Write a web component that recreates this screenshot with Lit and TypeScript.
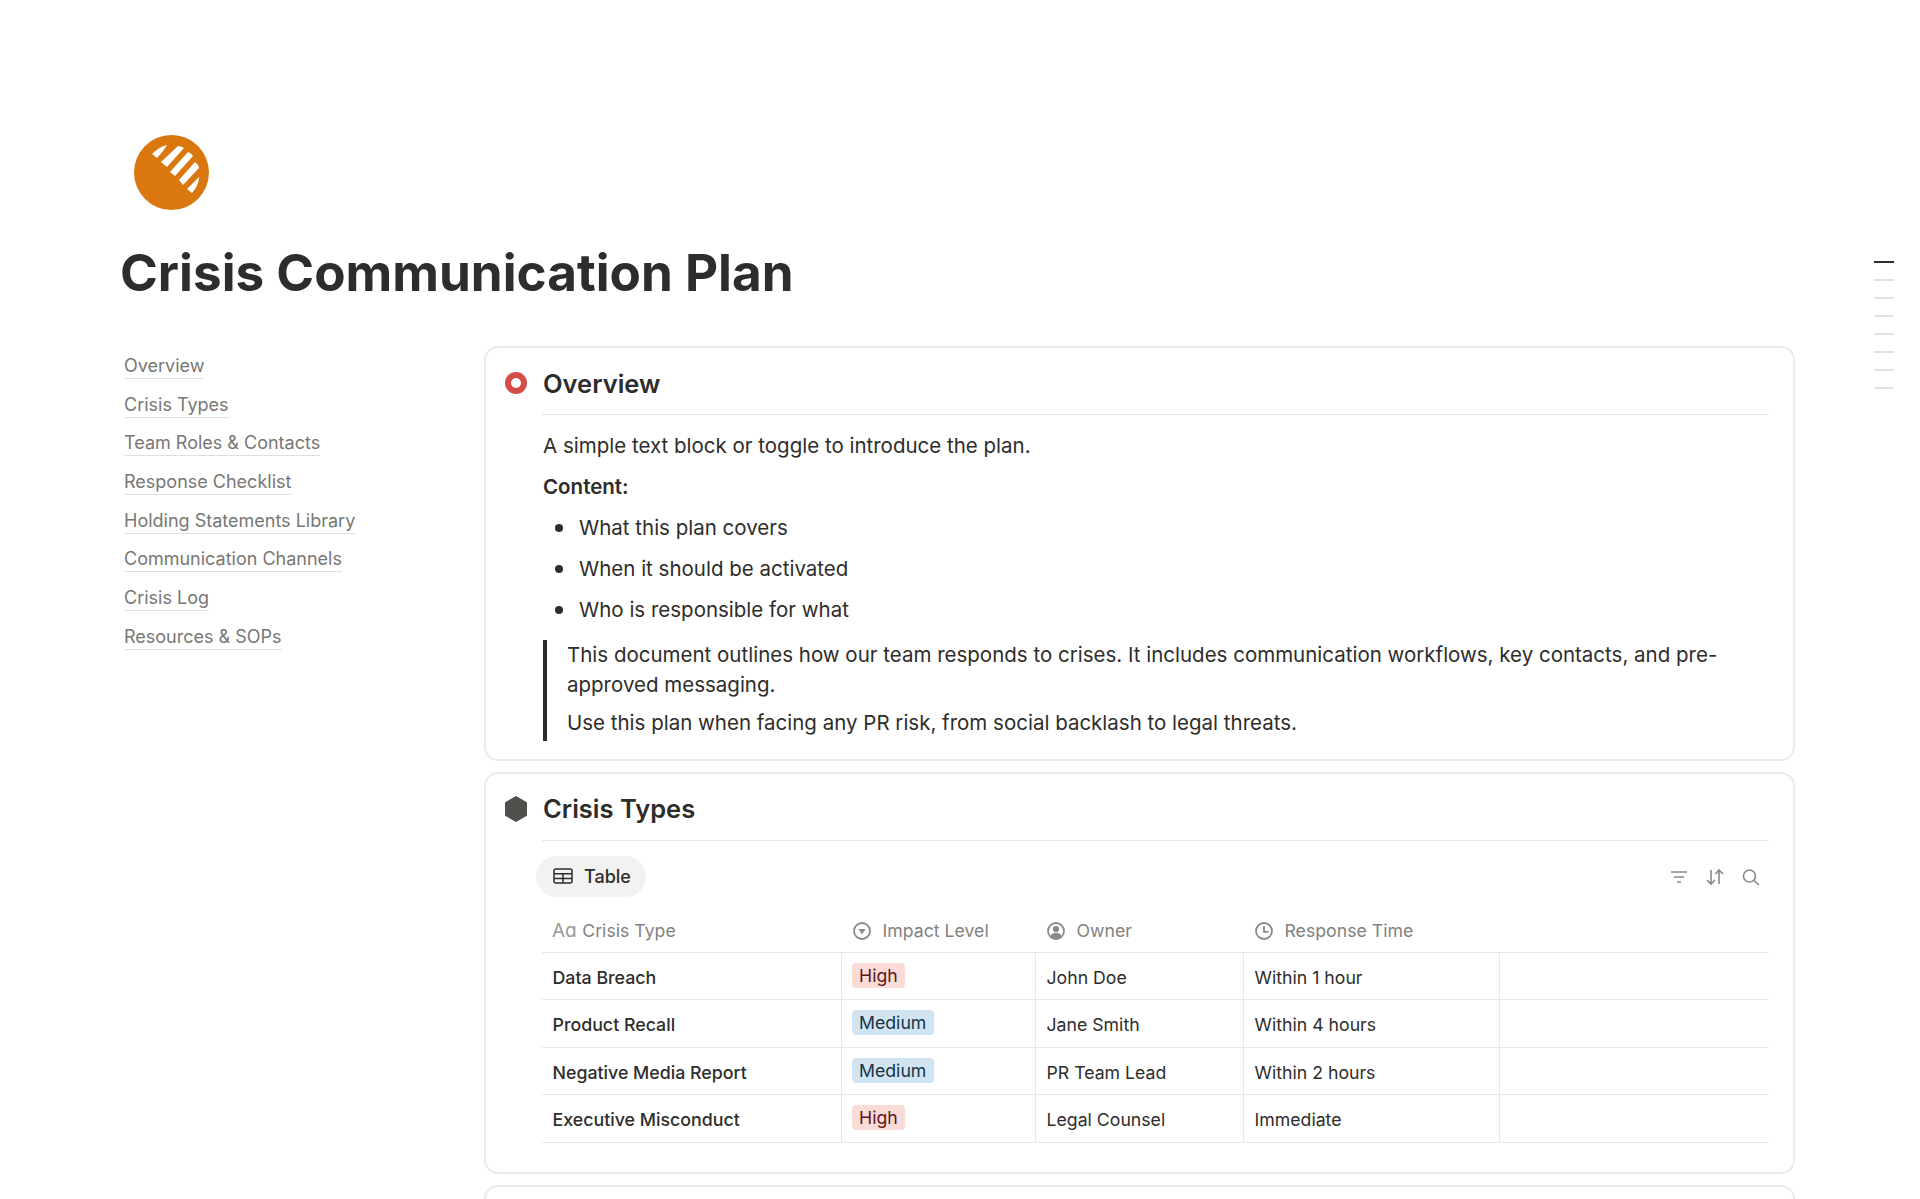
import { LitElement, css, html, svg } from "lit";
import { customElement } from "lit/decorators.js";

const navItems = [
  "Overview",
  "Crisis Types",
  "Team Roles & Contacts",
  "Response Checklist",
  "Holding Statements Library",
  "Communication Channels",
  "Crisis Log",
  "Resources & SOPs",
];

const rows = [
  { type: "Data Breach", impact: "High", owner: "John Doe", time: "Within 1 hour" },
  { type: "Product Recall", impact: "Medium", owner: "Jane Smith", time: "Within 4 hours" },
  { type: "Negative Media Report", impact: "Medium", owner: "PR Team Lead", time: "Within 2 hours" },
  { type: "Executive Misconduct", impact: "High", owner: "Legal Counsel", time: "Immediate" },
];

const logo = html`<svg width="75" height="75" viewBox="0 0 75 75">
  <circle cx="37.5" cy="37.5" r="37.5" fill="#da770f" />
  <g fill="#fff">
    <path d="M18 19 Q25 12 33 10 Q29 17 23 23 Z" />
    <path d="M27 27 L44 11 Q47 11 50 13 L33 32 Z" />
    <path d="M36 37 L54 17 Q57 18 59 21 L41 41 Z" />
    <path d="M45 45 L61 27 Q64 29 65 33 L49 50 Z" />
    <path d="M53 54 L65 42 Q65 50 58 58 Z" />
  </g>
</svg>`;

const grey = "#8a8987";

const icons = {
  select: svg`<circle cx="9" cy="9" r="8" fill="none" stroke=${grey} stroke-width="1.8" /><path d="M5.4 7h7.2L9 12.2z" fill=${grey} />`,
  person: svg`<circle cx="9" cy="9" r="8" fill="none" stroke=${grey} stroke-width="1.8" /><circle cx="9" cy="7" r="3.1" fill=${grey} /><path d="M3.4 14.2c1-2.7 3.1-3.5 5.6-3.5s4.6.8 5.6 3.5A8 8 0 0 1 9 17a8 8 0 0 1-5.6-2.8z" fill=${grey} />`,
  clock: svg`<circle cx="9" cy="9" r="8" fill="none" stroke=${grey} stroke-width="1.8" /><path d="M9 4.2V9.8H13.6" fill="none" stroke=${grey} stroke-width="1.8" />`,
};

const icon = (body: unknown) => html`<svg width="18" height="18" viewBox="0 0 18 18">${body}</svg>`;

@customElement("app-root")
export class AppRoot extends LitElement {
  static styles = css`
    :host {
      display: block;
      height: 100vh;
      overflow: hidden;
      position: relative;
      background: #fff;
      color: #2e2d2b;
      font-family: Inter, "Noto Sans", sans-serif;
    }

    .page {
      padding: 135px 125px 0 120px;
    }

    .logo {
      display: block;
      margin-left: 14px;
    }

    h1 {
      margin: 29px 0 0;
      font-size: 51.2px;
      line-height: 58px;
      font-weight: 700;
    }

    .columns {
      display: flex;
      margin-top: 45px;
    }

    .side {
      flex: 0 0 360px;
      padding: 7px 0 0 4px;
      display: flex;
      flex-direction: column;
      align-items: flex-start;
      gap: 12.7px;
    }

    .side a {
      font-size: 18px;
      line-height: 25px;
      color: #787774;
      border-bottom: 1px solid #dfdfdd;
    }

    .main {
      flex: 1;
      min-width: 0;
      display: flex;
      flex-direction: column;
      gap: 11px;
    }

    .card {
      border: 2px solid #ebebea;
      border-radius: 14px;
      padding: 0 24px 0 56px;
      position: relative;
    }

    .head {
      height: 67px;
      box-sizing: border-box;
      padding: 4px 0 0 1px;
      border-bottom: 1px solid #e6e6e4;
      display: flex;
      align-items: center;
    }

    .head h2 {
      margin: 0;
      font-size: 25.5px;
      font-weight: 600;
    }

    .mark {
      position: absolute;
      left: 18px;
      top: 23px;
    }

    .mark.hex {
      top: 22px;
    }

    .body {
      font-size: 20.5px;
      line-height: 30px;
      padding: 16px 0 17.5px 1px;
    }

    .body > p {
      margin: 0 0 11px;
    }

    .body > p.strong {
      font-weight: 600;
      margin-bottom: 5px;
    }

    ul {
      margin: 0;
      padding: 0;
      list-style: none;
    }

    li {
      display: flex;
      align-items: center;
      height: 41px;
      padding-left: 12px;
    }

    li::before {
      content: "";
      width: 8px;
      height: 8px;
      border-radius: 50%;
      background: #2e2d2b;
      margin-right: 16px;
    }

    blockquote {
      margin: 10px 0 0;
      border-left: 4px solid #2e2d2b;
      padding: 0 0 0 20px;
    }

    blockquote p {
      margin: 0 0 8px;
    }

    blockquote p:last-child {
      margin: 0;
      padding-bottom: 3px;
    }

    .tools {
      display: flex;
      align-items: center;
      justify-content: space-between;
      margin: 15px 0 0 -6px;
      height: 41px;
    }

    .pill {
      display: flex;
      align-items: center;
      gap: 11px;
      height: 41px;
      padding: 0 15px 0 17px;
      border-radius: 21px;
      background: #f2f2f1;
      font-size: 18px;
      font-weight: 500;
    }

    .actions {
      display: flex;
      gap: 16px;
      padding: 1px 8px 0 0;
    }

    .grid {
      display: grid;
      grid-template-columns: 300px 194px 208px 256px 269px;
      margin: 13px 0 29px;
    }

    .th {
      display: flex;
      align-items: center;
      gap: 11.5px;
      height: 43px;
      box-sizing: border-box;
      padding-left: 11px;
      color: #82817e;
      font-size: 17.7px;
      border-bottom: 1px solid #e6e6e4;
    }

    .th.first {
      gap: 5.5px;
      padding-left: 10px;
    }

    .aa {
      font-size: 19px;
      color: #9a9996;
    }

    .td {
      display: flex;
      align-items: center;
      height: 47.5px;
      box-sizing: border-box;
      padding: 3px 0 0 10.5px;
      font-size: 17.7px;
      border-bottom: 1px solid #e9e9e7;
      border-right: 1px solid #e9e9e7;
    }

    .td.last {
      border-right: 0;
    }

    .td.name {
      font-weight: 500;
      font-size: 17.8px;
    }

    .tag {
      line-height: 25px;
      padding: 0 7.5px;
      border-radius: 4px;
      margin: -4px 0 0 -1px;
    }

    .tag.High {
      background: #fadbd8;
      color: #5d1715;
    }

    .tag.Medium {
      background: #d0e4f1;
      color: #183347;
    }

    .stub {
      height: 60px;
    }

    .toc {
      position: absolute;
      left: 1874px;
      top: 261px;
      display: flex;
      flex-direction: column;
      gap: 16px;
    }

    .toc span {
      width: 20px;
      height: 2px;
      background: #e3e3e1;
    }

    .toc span.on {
      background: #2e2d2b;
    }
  `;

  renderHead(title: string, mark: unknown, hex = false) {
    return html`<span class="mark ${hex ? "hex" : ""}">${mark}</span>
      <div class="head"><h2>${title}</h2></div>`;
  }

  render() {
    return html`<div class="page">
        <div class="logo">${logo}</div>
        <h1>Crisis Communication Plan</h1>
        <div class="columns">
          <nav class="side">${navItems.map((n) => html`<a>${n}</a>`)}</nav>
          <div class="main">
            <section class="card">
              ${this.renderHead(
                "Overview",
                html`<svg width="24" height="24" viewBox="0 0 24 24">
                  <circle cx="12" cy="12" r="11" fill="#d44c47" />
                  <circle cx="12" cy="12" r="5" fill="#fff" />
                </svg>`,
              )}
              <div class="body">
                <p>A simple text block or toggle to introduce the plan.</p>
                <p class="strong">Content:</p>
                <ul>
                  <li>What this plan covers</li>
                  <li>When it should be activated</li>
                  <li>Who is responsible for what</li>
                </ul>
                <blockquote>
                  <p>
                    This document outlines how our team responds to crises. It includes communication workflows, key
                    contacts, and pre-approved messaging.
                  </p>
                  <p>Use this plan when facing any PR risk, from social backlash to legal threats.</p>
                </blockquote>
              </div>
            </section>
            <section class="card">
              ${this.renderHead(
                "Crisis Types",
                html`<svg width="24" height="26" viewBox="0 0 24 26">
                  <path d="M12 0.5 L22.5 6.5 V19.5 L12 25.5 L1.5 19.5 V6.5 Z" fill="#4f4f4b" stroke="#4f4f4b" stroke-linejoin="round" />
                </svg>`,
                true,
              )}
              <div class="tools">
                <div class="pill">
                  <svg width="20" height="16" viewBox="0 0 20 16" fill="none" stroke="#2e2d2b" stroke-width="1.5">
                    <rect x="1" y="1" width="18" height="14" rx="2" />
                    <path d="M1 5.8H19M1 10.4H19M10 5.8V15" />
                  </svg>
                  Table
                </div>
                <div class="actions">
                  <svg width="20" height="18" viewBox="0 0 20 18" fill="none" stroke="#8a8987" stroke-width="1.6">
                    <path d="M2 4H18M5 9H15M8 14H12" />
                  </svg>
                  <svg width="20" height="18" viewBox="0 0 20 18" fill="none" stroke="#8a8987" stroke-width="1.6">
                    <path d="M6 2V16M2 12L6 16L10 12M14 16V2M10.5 6L14 2L18 6" />
                  </svg>
                  <svg width="20" height="18" viewBox="0 0 20 18" fill="none" stroke="#8a8987" stroke-width="1.6">
                    <circle cx="8.5" cy="8" r="6" />
                    <path d="M13 12.5L18 17" />
                  </svg>
                </div>
              </div>
              <div class="grid">
                <div class="th first"><span class="aa">Aɑ</span>Crisis Type</div>
                <div class="th">${icon(icons.select)}Impact Level</div>
                <div class="th">${icon(icons.person)}Owner</div>
                <div class="th">${icon(icons.clock)}Response Time</div>
                <div class="th"></div>
                ${rows.map(
                  (r) => html`<div class="td name">${r.type}</div>
                    <div class="td"><span class="tag ${r.impact}">${r.impact}</span></div>
                    <div class="td">${r.owner}</div>
                    <div class="td">${r.time}</div>
                    <div class="td last"></div>`,
                )}
              </div>
            </section>
            <section class="card stub"></section>
          </div>
        </div>
      </div>
      <div class="toc">
        <span class="on"></span>
        ${[1, 2, 3, 4, 5, 6, 7].map(() => html`<span></span>`)}
      </div>`;
  }
}
